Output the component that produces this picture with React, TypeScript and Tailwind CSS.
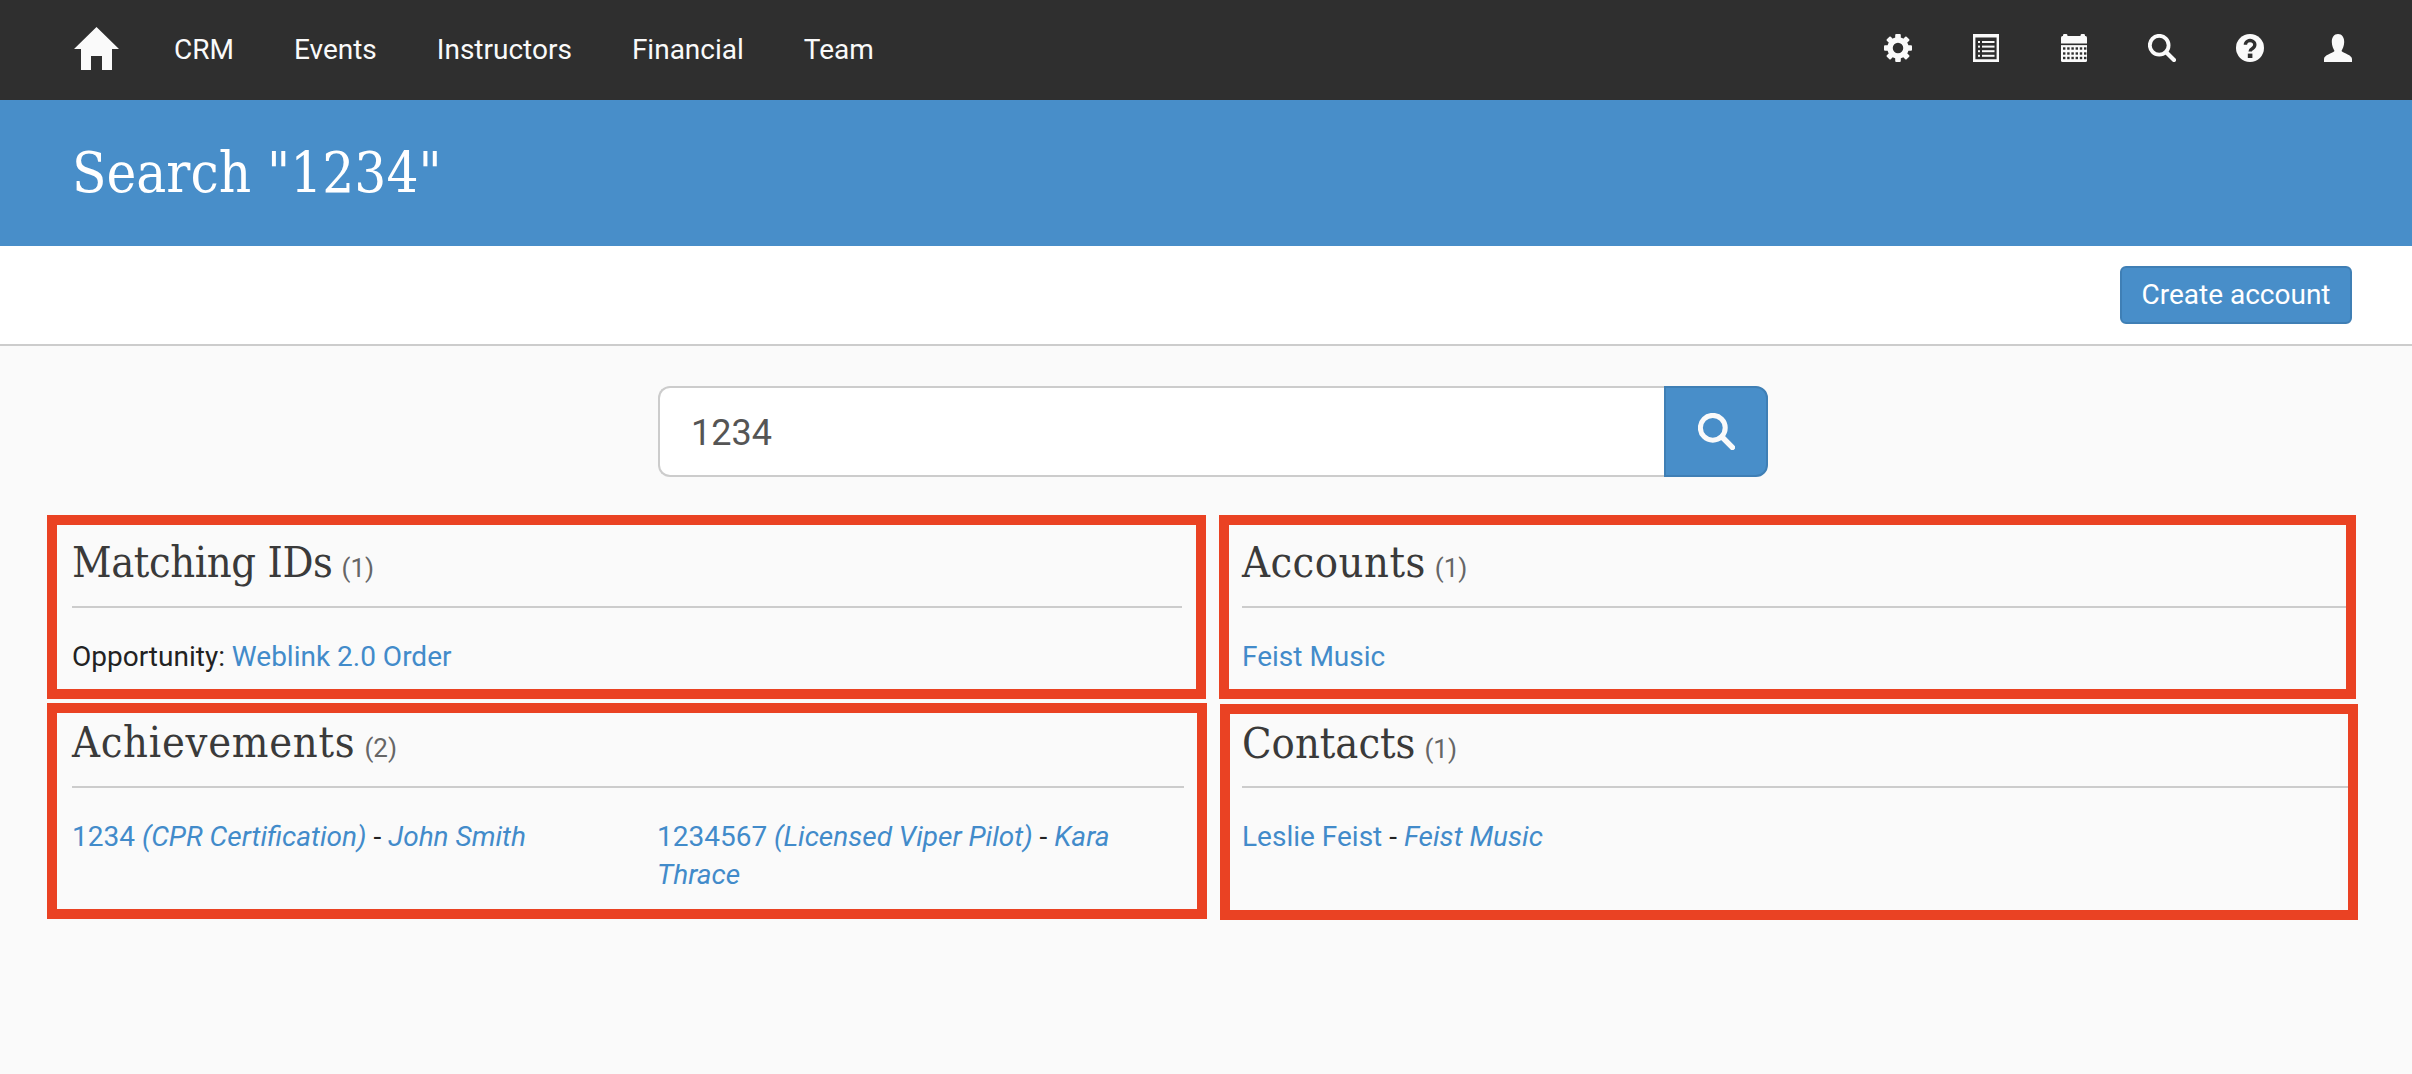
const slab = "font-['DejaVu_Serif_Condensed','DejaVu_Serif',serif]";

function HomeIcon() {
  return (
    <svg width="45" height="43" viewBox="0 0 45 43" fill="#fafafa">
      <path d="M22.5 0 45 22h-7v21H28V29H17v14H7V22H0z" />
    </svg>
  );
}

function GearIcon() {
  const angles = [0, 45, 90, 135, 180, 225, 270, 315];
  return (
    <svg width="28" height="28" viewBox="0 0 28 28" fill="#fafafa">
      <circle cx="14" cy="14" r="8" fill="none" stroke="#fafafa" strokeWidth="5.5" />
      {angles.map((a) => (
        <rect key={a} x="11.2" y="0" width="5.6" height="6" rx="1" transform={`rotate(${a} 14 14)`} />
      ))}
    </svg>
  );
}

function ListIcon() {
  return (
    <svg width="28" height="28" viewBox="0 0 28 28" fill="#fafafa">
      <path fillRule="evenodd" d="M1 0h26v28H1zM3.400 3.400v21.800h21.200V3.400z" />
      {[8, 12.6, 17.2, 21.8].map((y) => (
        <g key={y}>
          <rect x="6" y={y - 1} width="2" height="2" />
          <rect x="10" y={y - 1} width="12.500" height="2" />
        </g>
      ))}
    </svg>
  );
}

function CalendarIcon() {
  const rows = [14.5, 19.5, 24];
  const cols = [3, 7.2, 11.4, 15.6, 19.8, 24];
  return (
    <svg width="28" height="28" viewBox="0 0 28 28" fill="#fafafa">
      <rect x="1" y="2" width="26" height="26" rx="1.500" />
      <rect x="3" y="0" width="4.400" height="4" rx="1.200" />
      <rect x="20.600" y="0" width="4.400" height="4" rx="1.200" />
      <rect x="1" y="9.500" width="26" height="1.600" fill="#2f2f2f" />
      {rows.map((y) =>
        cols.map((x) => (
          <rect key={`${x}-${y}`} x={x} y={y - 1.2} width="2.400" height="2.400" fill="#2f2f2f" />
        )),
      )}
    </svg>
  );
}

function SearchIcon({ size = 28 }: { size?: number }) {
  return (
    <svg width={size} height={size} viewBox="0 0 28 28" fill="none" stroke="#fafafa">
      <circle cx="11.200" cy="11.200" r="9.400" strokeWidth="3.800" />
      <path d="M18.200 18.200 26 26" strokeWidth="4.200" strokeLinecap="round" />
    </svg>
  );
}

function QuestionIcon() {
  return (
    <svg width="28" height="28" viewBox="0 0 28 28">
      <circle cx="14" cy="14" r="14" fill="#fafafa" />
      <path d="M9.400 10.800a4.700 4.300 0 1 1 7.400 3.500c-1.600 1-2.700 1.700-2.700 3.300" fill="none" stroke="#2f2f2f" strokeWidth="3.400" />
      <rect x="11.800" y="19.600" width="4.600" height="4.400" fill="#2f2f2f" />
    </svg>
  );
}

function UserIcon() {
  return (
    <svg width="28" height="28" viewBox="0 0 28 28" fill="#fafafa">
      <path d="M14 0c4 0 6.200 3.500 6.200 8 0 4-1.700 7-2.700 9 2.500 2.500 10.500 4 10.500 8v3H0v-3c0-4 8-5.500 10.500-8-1-2-2.700-5-2.700-9C7.800 3.500 10 0 14 0z" />
    </svg>
  );
}

function NavBar() {
  const links = ["CRM", "Events", "Instructors", "Financial", "Team"];
  return (
    <nav className="flex h-[100px] items-center justify-between bg-[#2f2f2f] pl-[74px] pr-[60px]">
      <div className="flex items-center">
        <a className="mb-[3px] mr-[55px]"><HomeIcon /></a>
        <div className="flex gap-[60px] text-[28px] text-[#fafafa]">
          {links.map((l) => (
            <a key={l}>{l}</a>
          ))}
        </div>
      </div>
      <div className="mb-[4px] flex gap-[60px]">
        <GearIcon />
        <ListIcon />
        <CalendarIcon />
        <SearchIcon />
        <QuestionIcon />
        <UserIcon />
      </div>
    </nav>
  );
}

function Heading({ title, n, extra }: { title: string; n: number; extra: string }) {
  return (
    <h2 className={`${slab} border-b-2 border-[#ccc] pb-[14px] text-[43px] font-normal text-[#3a3a3a] ${extra}`}>
      {title}
      <small className="ml-[9px] font-['Roboto',sans-serif] text-[26px] leading-none tracking-normal text-[#666]">({n})</small>
    </h2>
  );
}

export default function App() {
  return (
    <div className="min-h-[1074px] bg-[#fafafa] font-['Roboto',sans-serif] text-[28px] text-[#222]">
      <NavBar />
      <header className="flex h-[146px] items-center bg-[#488ec9] pl-[72px]">
        <h1 className={`${slab} text-[56px] font-normal text-white`}>Search "1234"</h1>
      </header>
      <div className="flex h-[100px] items-center justify-end border-b-2 border-[#ccc] bg-white pr-[60px]">
        <button className="h-[58px] w-[232px] rounded-[6px] border-2 border-[#3f7fb5] bg-[#488ec9] text-[28px] text-white">
          Create account
        </button>
      </div>

      <div className="ml-[658px] mt-[40px] flex h-[91px] w-[1110px]">
        <input
          readOnly
          value="1234"
          className="h-full min-w-0 flex-1 rounded-l-[12px] border-2 border-r-0 border-[#ccc] bg-white pl-[31px] pt-[2px] text-[36px] text-[#555] outline-none"
        />
        <button className="flex w-[104px] items-center justify-center rounded-r-[12px] border-2 border-[#3f7fb5] bg-[#488ec9]">
          <SearchIcon size={37} />
        </button>
      </div>

      <div className="ml-[47px] mt-[38px] grid grid-cols-[1159px_1137px] grid-rows-[184px_216px] gap-x-[13px] gap-y-[4px]">
        <section className="border-[10px] border-[#ea4223] pl-[15px] pr-[14px] pt-[8px]">
          <Heading title="Matching IDs" n={1} extra="leading-[59px] tracking-[-0.4px]" />
          <p className="mt-[30px] leading-[38px]">
            Opportunity: <a className="text-[#428bca]">Weblink 2.0 Order</a>
          </p>
        </section>

        <section className="border-[10px] border-[#ea4223] pl-[13px] pt-[8px]">
          <Heading title="Accounts" n={1} extra="leading-[59px] tracking-[0.5px]" />
          <p className="mt-[30px] leading-[38px]">
            <a className="text-[#428bca]">Feist Music</a>
          </p>
        </section>

        <section className="-mr-px border-[10px] border-[#ea4223] pl-[15px] pr-[13px]">
          <Heading title="Achievements" n={2} extra="leading-[59px] tracking-[0.75px]" />
          <div className="mt-[30px] grid grid-cols-[585px_1fr] leading-[38px]">
            <p>
              <a className="text-[#428bca]">1234 <i>(CPR Certification)</i></a> - <a className="italic text-[#428bca]">John Smith</a>
            </p>
            <p>
              <a className="text-[#428bca]">1234567 <i>(Licensed Viper Pilot)</i></a> - <a className="italic text-[#428bca]">Kara Thrace</a>
            </p>
          </div>
        </section>

        <section className="-mb-px -mr-[2px] ml-px mt-px border-[10px] border-[#ea4223] pl-[12px]">
          <Heading title="Contacts" n={1} extra="leading-[58px]" />
          <p className="mt-[30px] leading-[38px]">
            <a className="text-[#428bca]">Leslie Feist</a> - <a className="italic text-[#428bca]">Feist Music</a>
          </p>
        </section>
      </div>
    </div>
  );
}
